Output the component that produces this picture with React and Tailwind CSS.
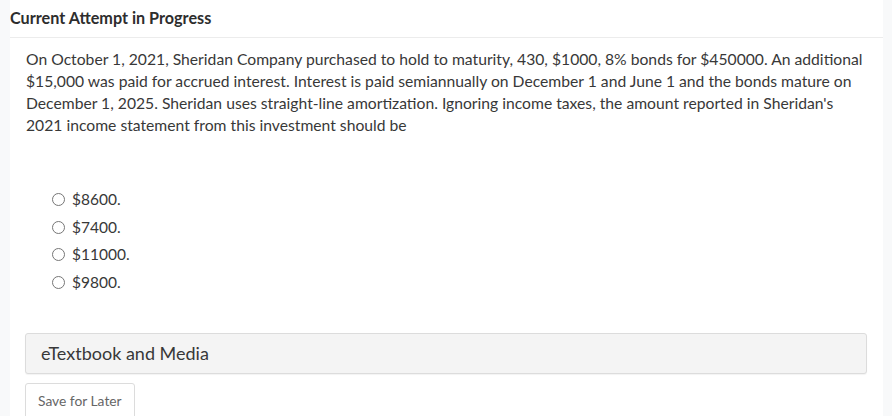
import React from 'react';

const options = ['$8600.', '$7400.', '$11000.', '$9800.'];

const App = () => {
  return (
    <div className="flex w-[892px] h-[416px] overflow-hidden bg-[#f8f9fa] font-['Lato','Noto_Sans',sans-serif] text-[#333]">
      <div className="w-[10px] shrink-0" />
      <div className="flex-1 bg-white">
        <div className="h-[38px] flex items-center border-b border-[#ececec]">
          <h2 className="text-[16.2px] font-bold text-[#2d2d2d] pb-px">Current Attempt in Progress</h2>
        </div>
        <div className="pl-[15px] pr-[16px] pt-[10px]">
          <p className="text-[15.7px] leading-[22px] pl-px text-[#383838]">
            On October 1, 2021, Sheridan Company purchased to hold to maturity, 430, $1000, 8% bonds for $450000. An additional
            $15,000 was paid for accrued interest. Interest is paid semiannually on December 1 and June 1 and the bonds mature on
            December 1, 2025. Sheridan uses straight-line amortization. Ignoring income taxes, the amount reported in Sheridan's
            2021 income statement from this investment should be
          </p>

          <div className="mt-[50px] pl-[27px] flex flex-col">
            {options.map((opt) => (
              <label key={opt} className="h-[27.5px] flex items-center gap-[7px] text-[15.5px] text-[#383838]">
                <span className="w-[13px] h-[13px] rounded-full border border-[#767676] bg-white shrink-0" />
                <span>{opt}</span>
              </label>
            ))}
          </div>

          <div className="mt-[37px] h-[41px] flex items-center px-[15px] bg-[#f4f4f4] border border-[#dcdcdc] rounded-[3px] shadow-[0_1px_1px_rgba(0,0,0,0.05)]">
            <span className="text-[18px] text-[#383838]">eTextbook and Media</span>
          </div>

          <button className="mt-[9px] h-[36px] px-[12px] border border-[#dcdcdc] rounded-[3px] bg-white text-[13.8px] text-[#666]">
            Save for Later
          </button>
        </div>
      </div>
      <div className="w-[9px] shrink-0" />
    </div>
  );
};

export default App;
